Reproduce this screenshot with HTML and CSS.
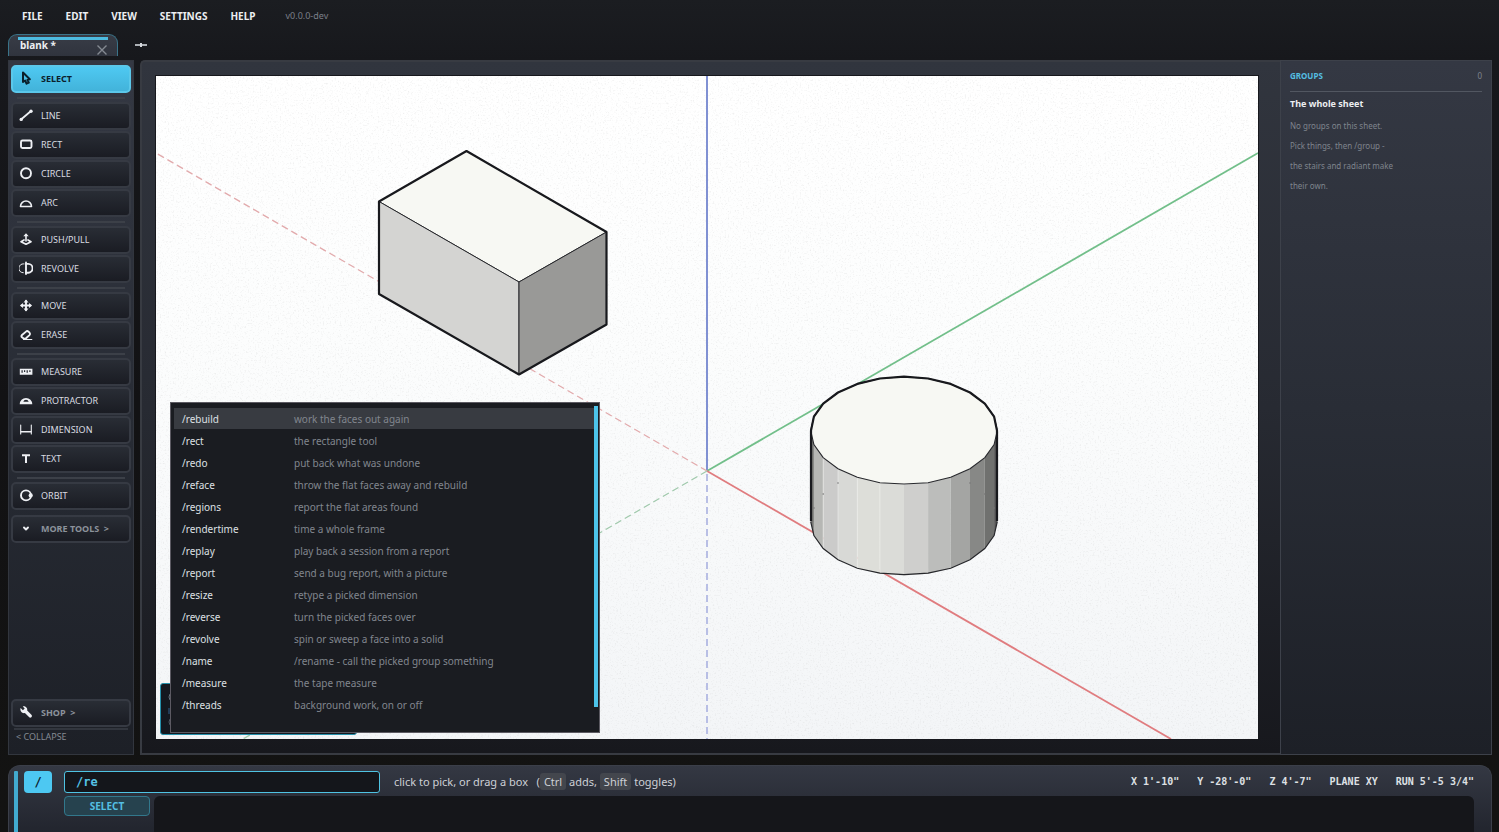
FILE: index.html
```html
<!DOCTYPE html>
<html lang="en">
<head>
<meta charset="utf-8">
<title>blank *</title>
<link rel="stylesheet" href="styles.css">
</head>
<body>
<nav class="menu">
  <button>FILE</button><button>EDIT</button><button>VIEW</button><button>SETTINGS</button><button>HELP</button>
  <span class="version">v0.0.0-dev</span>
</nav>
<div class="tabs">
  <div class="tab">
    <span class="tab-name">blank *</span>
    <button class="tab-close" aria-label="Close"><svg width="12" height="12" viewBox="0 0 12 12"><path d="M1.500 1.500l9 9M10.500 1.500l-9 9" stroke-width="1.400"/></svg></button>
  </div>
  <button class="tab-add" aria-label="New sheet"><svg width="12" height="12" viewBox="0 0 12 12"><path d="M0 6h12" stroke-width="1.600"/><path d="M6 4v4" stroke-width="2"/></svg></button>
</div>
<main class="work">
  <aside class="tools">
    <button class="tool active"><svg viewBox="0 0 14 14"><path d="M4 1.500v9.500l2.200-1.500 1.300 3.200 2.300-1.100-1.300-2.700 2.300-.6z" stroke-width="2"/></svg>SELECT</button>
    <hr>
    <button class="tool"><svg viewBox="0 0 14 14"><path d="M2 11.500L12 3" stroke-width="1.800"/><circle class="dot" cx="2.200" cy="11.400" r="1.700"/><circle class="dot" cx="12" cy="3.200" r="1.700"/></svg>LINE</button>
    <button class="tool"><svg viewBox="0 0 14 14"><rect x="2" y="3.500" width="10.500" height="7.500" rx="1.500"/></svg>RECT</button>
    <button class="tool"><svg viewBox="0 0 14 14"><circle cx="7" cy="7.300" r="5"/></svg>CIRCLE</button>
    <button class="tool"><svg viewBox="0 0 14 14"><path d="M1.500 11.500a5.500 5.500 0 0 1 11 0z" stroke-width="1.600"/></svg>ARC</button>
    <hr>
    <button class="tool"><svg viewBox="0 0 14 14"><path d="M7 9V3" stroke-width="1.600"/><path class="dot" d="M7 1.300l2.700 3H4.300z"/><path d="M5 8L2 9.700l5 2.500 5-2.500L9 8" stroke-width="1.700"/></svg>PUSH/PULL</button>
    <button class="tool"><svg viewBox="0 0 14 14"><path d="M7 1.500v11.500"/><path d="M7 2.900h2.200a4.400 4.400 0 0 1 0 8.800H7"/><path d="M5 2.900h-.8a4.400 4.400 0 0 0 0 8.800h.8" stroke-width="1" stroke-dasharray="3 .8"/></svg>REVOLVE</button>
    <hr>
    <button class="tool"><svg viewBox="0 0 14 14"><path d="M7 3v9M2.500 7.500h9" stroke-width="1.900"/><path class="dot" d="M7 1.500l2.500 3h-5zM7 13.500l2.500-3h-5zM1 7.500l3-2.500v5zM13 7.500L10 5v5z"/></svg>MOVE</button>
    <button class="tool"><svg viewBox="0 0 14 14"><path d="M5 11.800L3 10.300c-.8-.6-.8-1.500 0-2.300L7 4.600c.8-.7 1.700-.6 2.500.1l1 1c.7.8.7 1.700 0 2.400L7 11.300z"/><path d="M4.500 12.500h8.300" stroke-width="1.200"/></svg>ERASE</button>
    <hr>
    <button class="tool"><svg viewBox="0 0 14 14"><path class="dot" fill-rule="evenodd" d="M.8 4.800h12.600v6H.8zM2.500 6.300v2.500h1.200V6.300zM5 6.300v1.700h1.200V6.300zM7.600 6.300v2.500h1.200V6.300zM10.300 6.300v1.700h1.200V6.300z"/></svg>MEASURE</button>
    <button class="tool"><svg viewBox="0 0 14 14"><path class="dot" fill-rule="evenodd" d="M.7 11.200a6.200 6.200 0 0 1 12.600 0zM4.300 8.700h5.400a2.800 2.800 0 0 0-5.400 0z"/></svg>PROTRACTOR</button>
    <button class="tool"><svg viewBox="0 0 14 14"><path d="M1.700 3v9M12.300 3v9" stroke-width="1.100"/><path d="M2 9.800h10" stroke-width="1.500"/></svg>DIMENSION</button>
    <button class="tool"><svg viewBox="0 0 14 14"><path d="M3 4.300h8M7 4v8" stroke-width="2" stroke-linecap="butt"/></svg>TEXT</button>
    <hr>
    <button class="tool"><svg viewBox="0 0 14 14"><circle cx="7" cy="7.400" r="5"/><circle class="dot" cx="11.700" cy="7.400" r="2.100"/></svg>ORBIT</button>
    <button class="tool fold more"><svg viewBox="0 0 14 14"><path d="M5 6.500l2 2 2-2" stroke-width="1.900"/></svg>MORE TOOLS &nbsp;&gt;</button>
    <button class="tool fold shop"><svg viewBox="0 0 14 14"><path class="dot" d="M1.600 3l2.300 2.200 1.800-1.600L3.800 1.500C6 .8 8.800 3 8.200 5.500l4.200 4.200c1.600 1.700-.8 4-2.400 2.400L5.900 8C3.200 8.800.6 5.800 1.600 3z"/></svg>SHOP &nbsp;&gt;</button>
    <button class="collapse">&lt; COLLAPSE</button>
  </aside>
  <section class="frame">
    <div class="sheet">
      <svg class="drawing" viewBox="156 76 1102 663" preserveAspectRatio="xMidYMid slice" role="img" aria-label="Isometric sheet with a box and a cylinder">
        <defs>
          <linearGradient id="paper" x1="0" y1="0" x2="0" y2="1"><stop offset="0" stop-color="#fff"/><stop offset=".4" stop-color="#fcfdfd"/><stop offset="1" stop-color="#f3f5f7"/></linearGradient>
          <filter id="grain" x="0" y="0" width="1" height="1"><feTurbulence type="fractalNoise" baseFrequency=".6" numOctaves="2" seed="4"/><feColorMatrix values="0 0 0 0 .5  0 0 0 0 .5  0 0 0 0 .5  .7 0 0 0 -.38"/></filter>
        </defs>
        <rect x="156" y="76" width="1102" height="663" fill="url(#paper)"/>
        <rect x="156" y="76" width="1102" height="663" filter="url(#grain)"/>
        <g fill="none" stroke-width="1.800">
          <path d="M707 471V76" stroke="#7385cf"/>
          <path d="M707 471L1258 153" stroke="#72bf8a"/>
          <path d="M707 471L1171 739" stroke="#e07c7f"/>
          <path d="M707 474V739" stroke="#b2b9e3" stroke-dasharray="7 4"/>
          <path d="M707 471L156 153" stroke="#e2aaac" stroke-width="1.300" stroke-dasharray="7 4"/>
          <path d="M707 471L243 739" stroke="#a0c9ac" stroke-width="1.300" stroke-dasharray="7 4"/>
        </g>
        <g stroke="#26272b" stroke-width="1" stroke-linejoin="round">
          <path fill="#f7f8f3" d="M379 201.500L466.500 151 606.500 232 519 282z"/>
          <path fill="#d4d4d2" d="M379 201.500L519 282v92.500L379 294z"/>
          <path fill="#999997" d="M519 282l87.500-50v92.500L519 374.500z"/>
          <path fill="none" stroke="#18191d" stroke-width="2.200" d="M379 201.500L466.500 151 606.500 232v92.500L519 374.500 379 294z"/>
        </g>
        <g>
          <path fill="#777875" d="M810.700 430.600l3.200 14v91l-3.200-14z"/>
          <path fill="#b6b7b4" d="M813.900 444.600l9.300 13v91l-9.300-13z"/>
          <path fill="#cbcbca" d="M823.200 457.600l14.800 11.100v91l-14.800-11.100z"/>
          <path fill="#d8d9d6" d="M838 468.700l19.300 8.600v91l-19.300-8.600z"/>
          <path fill="#ddded9" d="M857.300 477.300l22.600 5.400v91l-22.600-5.400z"/>
          <path fill="#dbdcd8" d="M879.900 482.700l24.100 1.800v91l-24.100-1.800z"/>
          <path fill="#cfcfcd" d="M904 484.500l24.100-1.800v91l-24.100 1.800z"/>
          <path fill="#bcbdbb" d="M928.100 482.700l22.600-5.400v91l-22.600 5.400z"/>
          <path fill="#a4a5a3" d="M950.700 477.300l19.300-8.600v91l-19.300 8.600z"/>
          <path fill="#878886" d="M970 468.700l14.800-11.100v91L970 559.700z"/>
          <path fill="#70716f" d="M984.800 457.600l9.300-13v91l-9.300 13z"/>
          <path fill="#555" d="M994.100 444.600l3.200-14v91l-3.200 14z"/>
          <path fill="none" stroke="#efefed" stroke-width=".6" d="M823.200 458v90M838 469v90M857.300 478v90M879.900 483v90"/>
          <g fill="#777"><circle cx="823.200" cy="494" r=".8"/><circle cx="838" cy="483" r=".8"/><circle cx="970" cy="483" r=".8"/><circle cx="984.800" cy="494" r=".8"/><circle cx="814" cy="508" r=".8"/><circle cx="994" cy="508" r=".8"/></g>
          <path fill="#f7f8f3" stroke="#26272b" stroke-width="1.100" d="M904 376.700L928.100 378.500 950.700 383.900 970 392.500 984.800 403.600 994.100 416.600 997.300 430.600 994.100 444.600 984.800 457.600 970 468.700 950.700 477.300 928.100 482.700 904 484 879.900 482.700 857.300 477.300 838 468.700 823.200 457.600 813.900 444.600 810.700 430.600 813.900 416.600 823.200 403.600 838 392.500 857.300 383.900 879.900 378.500z"/>
          <path fill="none" stroke="#26272b" stroke-width="1.200" d="M810.700 521.600L813.900 535.600 823.200 548.600 838 559.700 857.300 568.300 879.900 573.200 904 574.700 928.100 573.200 950.700 568.300 970 559.700 984.800 548.600 994.100 535.600 997.300 521.600"/>
          <path fill="none" stroke="#18191d" stroke-width="2.200" stroke-linejoin="round" d="M811 521V430.600L813.900 416.600 823.200 403.600 838 392.500 857.300 383.900 879.900 378.500 904 376.700 928.100 378.500 950.700 383.900 970 392.500 984.800 403.600 994.100 416.600 997 430.600V521"/>
        </g>
      </svg>
      <div class="note"><svg width="6" height="40" viewBox="0 0 6 40"><path d="M2 4q-2 3 0 6" stroke="#66707c"/><path d="M1 18v6" stroke="#315f8c"/><path d="M2 29q-2 3 0 6" stroke="#4c5560"/></svg></div>
      <div class="popup">
        <ul class="commands">
          <li class="picked"><span>/rebuild</span><span>work the faces out again</span></li>
          <li><span>/rect</span><span>the rectangle tool</span></li>
          <li><span>/redo</span><span>put back what was undone</span></li>
          <li><span>/reface</span><span>throw the flat faces away and rebuild</span></li>
          <li><span>/regions</span><span>report the flat areas found</span></li>
          <li><span>/rendertime</span><span>time a whole frame</span></li>
          <li><span>/replay</span><span>play back a session from a report</span></li>
          <li><span>/report</span><span>send a bug report, with a picture</span></li>
          <li><span>/resize</span><span>retype a picked dimension</span></li>
          <li><span>/reverse</span><span>turn the picked faces over</span></li>
          <li><span>/revolve</span><span>spin or sweep a face into a solid</span></li>
          <li><span>/name</span><span>/rename - call the picked group something</span></li>
          <li><span>/measure</span><span>the tape measure</span></li>
          <li><span>/threads</span><span>background work, on or off</span></li>
        </ul>
        <div class="scroll"><div class="thumb"></div></div>
      </div>
    </div>
  </section>
  <aside class="groups">
    <header><h2>GROUPS</h2><span>0</span></header>
    <h3>The whole sheet</h3>
    <p>No groups on this sheet.<br>Pick things, then /group -<br>the stairs and radiant make<br>their own.</p>
  </aside>
</main>
<footer class="console">
  <div class="stripe"></div>
  <button class="slash">/</button>
  <div class="console-body">
    <div class="line">
      <input class="entry" type="text" value="/re" aria-label="Command">
      <div class="hint">click to pick, or drag a box &nbsp; (<kbd>Ctrl</kbd> adds, <kbd>Shift</kbd> toggles)</div>
      <div class="readout"><span>X 1'-10"</span><span>Y -28'-0"</span><span>Z 4'-7"</span><span>PLANE XY</span><span>RUN 5'-5 3/4"</span></div>
    </div>
    <div class="log-row"><button class="mode">SELECT</button><div class="log"></div></div>
  </div>
</footer>
</body>
</html>
```
FILE: styles.css
```css
* { box-sizing: border-box; }
body {
  margin: 0;
  height: 100vh;
  display: flex;
  flex-direction: column;
  overflow: hidden;
  background: linear-gradient(#1b1d21, #17181c 60px, #121214 400px, #131312);
  color: #d5d8dd;
  font-family: "Noto Sans", sans-serif;
  font-size: 10px;
}
button {
  margin: 0;
  padding: 0;
  border: 0;
  background: none;
  color: inherit;
  font: inherit;
}
svg { fill: none; stroke: currentColor; }

.menu {
  flex: none;
  display: flex;
  align-items: center;
  gap: 23px;
  height: 32px;
  padding-left: 22px;
}
.menu button { color: #eceef1; font-weight: 700; }
.version { margin-left: 7px; color: #7a7f88; font-size: 9px; line-height: 12px; padding-bottom: 1px; }

.tabs {
  flex: none;
  display: flex;
  gap: 17px;
  height: 28px;
  padding: 2px 8px 4px;
}
.tab {
  display: flex;
  justify-content: space-between;
  width: 110px;
  padding: 0 9px;
  border: 1px solid #3a748a;
  border-bottom: 0;
  border-radius: 9px 9px 0 0;
  background: linear-gradient(#383c46, #30343e);
}
.tab-name {
  flex: 1;
  margin-top: 2px;
  padding: 1px 2px;
  border-top: 3px solid #4dbbe0;
  color: #eceef1;
  font-weight: 700;
  line-height: 8px;
}
.tab-close { width: 0; direction: rtl; padding-top: 8px; color: #858a92; }
.tab-add { height: 22px; color: #d5d8dd; }
.tab svg, .tab-add svg { display: block; }

.work {
  flex: 1;
  min-height: 0;
  display: flex;
  padding: 0 7px 0 8px;
}
.tools {
  flex: none;
  display: flex;
  flex-direction: column;
  gap: 1px;
  width: 126px;
  padding: 4px 2px 10px;
  border: 1px solid #32363e;
  background: linear-gradient(#343843, #282c35 50%, #1d2027);
}
.tool {
  flex: none;
  display: flex;
  align-items: center;
  gap: 8px;
  height: 28px;
  padding: 0 0 2px 6px;
  border: 2px solid #363a43;
  border-radius: 5px;
  background: linear-gradient(#292d35, #1a1c23);
  color: #d9dce1;
  font-size: 9px;
}
.tool svg { width: 14px; height: 14px; stroke: #eef0f4; stroke-width: 1.900; stroke-linejoin: round; stroke-linecap: round; }
.tool .dot { fill: #eef0f4; stroke: none; }
.tool.active {
  border-color: #5bc8ea;
  background: linear-gradient(#4ec9f2, #42b3da);
  color: #0b202b;
  font-weight: 700;
}
.tool.active svg { stroke: #0b202b; }
.tool.fold { color: #8c929b; font-weight: 700; }
.tools hr {
  flex: none;
  width: 108px;
  height: 2px;
  margin: 3px auto 2px;
  border: 0;
  background: #3c4048;
}
.more { margin-top: 4px; }
.shop { margin-top: auto; }
.collapse {
  margin: 0 3px;
  padding: 0 2px;
  border-top: 2px solid #32363e;
  color: #848992;
  font-size: 9px;
  line-height: 14px;
  text-align: left;
}

.frame {
  flex: 1;
  min-width: 0;
  display: flex;
  margin-left: 6px;
  padding: 14px 22px 14px 14px;
  border: 2px solid #383b42;
  border-right: 0;
  border-radius: 5px 0 0 0;
  background: linear-gradient(#31353e, #272a32 50%, #17181d);
}
.sheet { position: relative; flex: 1; min-width: 0; background: #fff; box-shadow: 0 0 0 1px #17181d; }
.drawing { display: block; width: 100%; height: 100%; stroke: none; }
.note {
  position: absolute;
  left: 4px;
  bottom: 4px;
  width: 197px;
  height: 52px;
  padding: 6px 7px;
  border: 1px solid #2590ab;
  border-radius: 3px;
  background: #141820;
}
.popup {
  position: absolute;
  left: 14px;
  bottom: 6px;
  display: flex;
  width: 430px;
  height: 331px;
  padding: 3px 1px 3px 3px;
  border: 1px solid #5c5a62;
  background: #1a1c21;
}
.commands { flex: 1; margin: 0; padding: 2px 0 0; list-style: none; }
.commands li {
  display: grid;
  grid-template-columns: 112px 1fr;
  height: 22px;
  padding-left: 8px;
  line-height: 22px;
  color: #81868e;
}
.commands li span:first-child { color: #dee0e4; }
.commands .picked { background: linear-gradient(#383b41, #383b41) 0 0 / 100% 21px no-repeat; }
.scroll { width: 4px; }
.thumb { height: 301px; background: #4dc4ea; }

.groups {
  flex: none;
  width: 212px;
  padding: 7px 9px;
  border: 1px solid #3d414a;
  background: linear-gradient(#343843, #292d36 50%, #1d2027);
  color: #7f848d;
  font-size: 8px;
}
.groups header {
  display: flex;
  justify-content: space-between;
  height: 24px;
  border-bottom: 1px solid #525761;
  line-height: 15px;
}
.groups h2 { margin: 0; color: #54bfe2; font-size: 8px; }
.groups h3 { margin: 5px 0; color: #eceef1; font-size: 9px; line-height: 14px; }
.groups p { margin: 0; line-height: 20px; }

.console {
  flex: none;
  display: flex;
  height: 67px;
  margin: 10px 7px 0 8px;
  padding: 5px 17px 0 5px;
  border: 1px solid #3b3f49;
  border-bottom: 0;
  border-radius: 12px 12px 0 0;
  background: linear-gradient(#343843, #22252e);
}
.stripe { width: 4px; background: #42abd0; border-radius: 1px 1px 0 0; }
.slash {
  width: 28px;
  height: 22px;
  margin: 0 12px 0 6px;
  border-radius: 4px;
  background: #4dc8f2;
  color: #0b202b;
  font: 700 12px "DejaVu Sans Mono", monospace;
}
.console-body { flex: 1; display: flex; flex-direction: column; gap: 3px; }
.line { display: flex; align-items: center; height: 22px; }
.entry {
  width: 316px;
  height: 22px;
  padding: 0 11px;
  border: 1px solid #4fc3e3;
  border-radius: 3px;
  outline: 0;
  background: #14161b;
  color: #54c2e6;
  font: 700 12px "DejaVu Sans Mono", monospace;
}
.hint { margin-left: 14px; color: #cdd0d6; font-size: 11px; line-height: 16px; white-space: nowrap; }
.hint kbd { padding: 1px 4px; border-radius: 3px; background: #43464d; font: inherit; }
.readout {
  display: flex;
  gap: 18px;
  margin-left: auto;
  padding-bottom: 1px;
  color: #dee0e4;
  font: 700 10px "DejaVu Sans Mono", monospace;
  white-space: nowrap;
}
.log-row { flex: 1; display: flex; gap: 4px; }
.mode {
  width: 86px;
  height: 20px;
  border: 1px solid #32788c;
  border-radius: 4px;
  background: #26424e;
  color: #54bfe2;
  font-weight: 700;
}
.log { flex: 1; border-radius: 6px 6px 0 0; background: #15161a; }
```
